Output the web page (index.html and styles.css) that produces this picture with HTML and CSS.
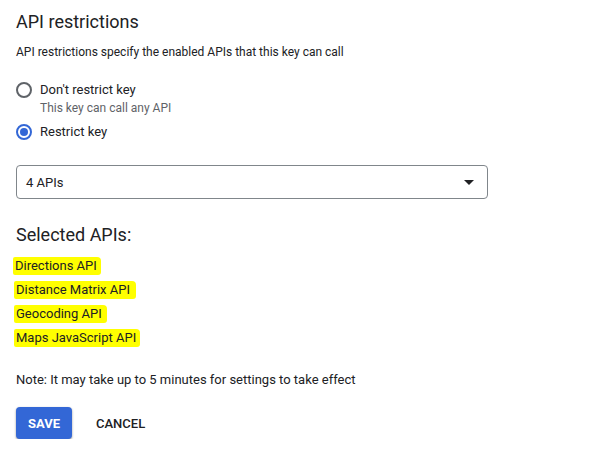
FILE: index.html
```html
<!DOCTYPE html>
<html>
<head>
<meta charset="utf-8">
<link rel="stylesheet" href="styles.css">
</head>
<body>
<div class="page">
  <h1 class="title">API restrictions</h1>
  <p class="desc">API restrictions specify the enabled APIs that this key can call</p>
  <div class="radios">
    <div class="radio-row">
      <span class="radio"></span>
      <div class="radio-text">
        <div class="radio-label">Don't restrict key</div>
        <div class="radio-sub">This key can call any API</div>
      </div>
    </div>
    <div class="radio-row">
      <span class="radio checked"></span>
      <div class="radio-text">
        <div class="radio-label">Restrict key</div>
      </div>
    </div>
  </div>
  <div class="select">
    <span class="select-value">4 APIs</span>
    <span class="select-arrow"></span>
  </div>
  <h2 class="subtitle">Selected APIs:</h2>
  <ul class="api-list">
    <li><span class="hl hl1">Directions API</span></li>
    <li><span class="hl hl2">Distance Matrix API</span></li>
    <li><span class="hl hl3">Geocoding API</span></li>
    <li><span class="hl hl4">Maps JavaScript API</span></li>
  </ul>
  <p class="note">Note: It may take up to 5 minutes for settings to take effect</p>
  <div class="actions">
    <button class="btn-save">SAVE</button>
    <button class="btn-cancel">CANCEL</button>
  </div>
</div>
</body>
</html>
```
FILE: styles.css
```css
* { box-sizing: border-box; }
html, body { margin: 0; padding: 0; background: #fff; }
body { font-family: Roboto, "Liberation Sans", Arial, sans-serif; color: #202124; }
.page { padding: 10px 16px 0 16px; width: 610px; }
.title { font-size: 18px; font-weight: 400; margin: 0; line-height: 24px; color: #202124; }
.desc { font-size: 12px; margin: 8px 0 0 0; line-height: 20px; color: #202124; }
.radios { margin-top: 18px; display: flex; flex-direction: column; gap: 6px; }
.radio-row { display: flex; align-items: flex-start; gap: 8px; }
.radio { width: 16px; height: 16px; border: 2px solid #5f6368; border-radius: 50%; margin-top: 2px; position: relative; flex: none; }
.radio.checked { border-color: #3367d6; }
.radio.checked::after { content: ""; position: absolute; left: 2px; top: 2px; width: 8px; height: 8px; border-radius: 50%; background: #3367d6; }
.radio-label { font-size: 13px; line-height: 20px; }
.radio-sub { font-size: 12px; line-height: 16px; color: #5f6368; }
.select { margin-top: 23px; width: 472px; height: 34px; border: 1px solid #80868b; border-radius: 4px; display: flex; align-items: center; justify-content: space-between; padding: 0 13px 0 9px; }
.select-value { font-size: 13px; color: #202124; }
.select-arrow { width: 0; height: 0; border-left: 5px solid transparent; border-right: 5px solid transparent; border-top: 5px solid #202124; }
.subtitle { font-size: 18px; font-weight: 400; margin: 24px 0 0 0; line-height: 24px; }
.api-list { list-style: none; margin: 9px 0 0 0; padding: 0; display: flex; flex-direction: column; gap: 6px; }
.api-list li { line-height: 18px; height: 18px; }
.hl { background: #ffff00; font-size: 13px; color: #202124; padding: 1px 3px 1px 2px; display: inline-block; line-height: 16px; border-radius: 2px 4px 3px 2px; }
.hl1 { margin-left: -3px; padding-right: 4px; }
.hl2 { margin-left: -2px; padding-right: 6px; }
.hl3 { margin-left: -2px; padding-right: 5px; }
.hl4 { margin-left: -2px; padding-right: 4px; }
.note { font-size: 13px; margin: 24px 0 0 0; line-height: 20px; }
.actions { margin-top: 17px; display: flex; align-items: center; gap: 8px; }
.btn-save { font-family: inherit; width: 56px; height: 32px; border: none; border-radius: 4px; background: #3367d6; color: #fff; font-weight: 700; font-size: 13px; box-shadow: 0 1px 2px rgba(0,0,0,0.3), 0 1px 3px rgba(0,0,0,0.15); padding: 0; }
.btn-cancel { font-family: inherit; height: 32px; border: none; background: transparent; color: #202124; font-weight: 500; font-size: 13px; padding: 0 16px; }
```
